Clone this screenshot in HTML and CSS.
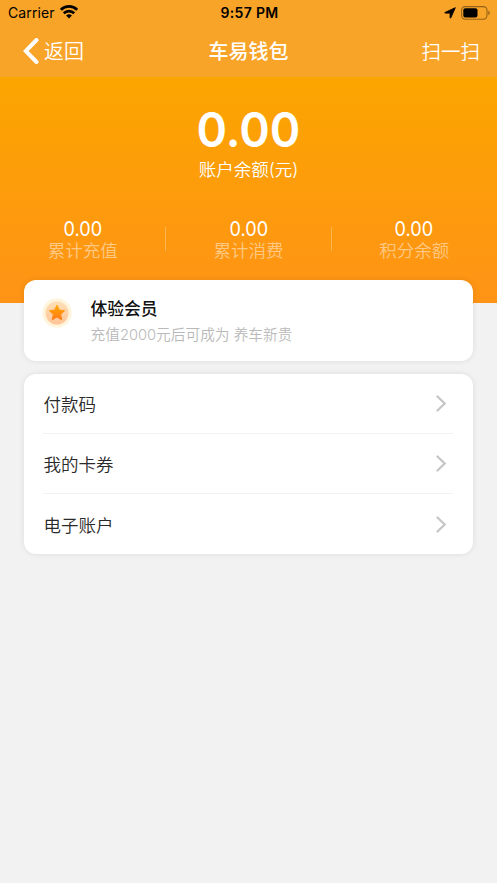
FILE: index.html
```html
<!DOCTYPE html>
<html lang="zh-CN">
<head>
<meta charset="utf-8">
<meta name="viewport" content="width=device-width, initial-scale=1">
<title>车易钱包</title>
<link rel="stylesheet" href="styles.css">
</head>
<body>
<header class="top">
  <div class="status">
    <div class="status-left"><span>Carrier</span>
      <svg class="wifi" width="18" height="14" viewBox="0 0 18 14" fill="none" stroke="#000" stroke-width="2.7"><path d="M.9 4.8a11.5 11.5 0 0 1 16.2 0M3.8 8.2a7.4 7.4 0 0 1 10.4 0"/><path d="M9 13.4 6.1 10.6a4.2 4.2 0 0 1 5.8 0z" fill="#000" stroke="none"/></svg>
    </div>
    <div class="time">9:57 PM</div>
    <div class="status-right">
      <svg width="12" height="12" viewBox="0 0 12 12"><path d="M11.3.7 6.8 10.8q-.5.8-.7-.2V6.1H1.2Q.3 5.9 1.1 5.4z" stroke="#000" stroke-width=".9" stroke-linejoin="round"/></svg>
      <svg width="30" height="14" viewBox="0 0 30 14"><rect x=".6" y=".6" width="25.4" height="12.6" rx="3.6" fill="none" stroke="#000" stroke-opacity=".4" stroke-width="1.1"/><rect x="2.3" y="2.3" width="14.2" height="9.2" rx="2"/><path d="M27.4 4.8v4.4q1.4-.6 1.4-2.2t-1.4-2.2z" fill-opacity=".45"/></svg>
    </div>
  </div>
  <nav class="nav">
    <div class="back"><svg width="16" height="26" viewBox="0 0 16 26"><path d="M13.5 2 2.7 13l10.8 11" fill="none" stroke="#fff" stroke-width="4" stroke-linecap="round" stroke-linejoin="miter"/></svg><span>返回</span></div>
    <h1>车易钱包</h1>
    <div class="scan">扫一扫</div>
  </nav>
</header>
<section class="hero">
  <div class="balance">0.00</div>
  <div class="balance-label">账户余额(元)</div>
  <div class="stats">
    <div class="stat"><b>0.00</b><span>累计充值</span></div>
    <div class="stat"><b>0.00</b><span>累计消费</span></div>
    <div class="stat"><b>0.00</b><span>积分余额</span></div>
  </div>
</section>
<main>
  <section class="card member">
    <svg class="medal" width="30" height="30" viewBox="0 0 30 30">
      <defs><linearGradient id="disc" x2="0" y2="1"><stop stop-color="#ffdfb5"/><stop offset="1" stop-color="#ffc497"/></linearGradient><linearGradient id="star" x2="0" y2="1"><stop stop-color="#ffa800"/><stop offset="1" stop-color="#ff7c1b"/></linearGradient></defs>
      <circle cx="15" cy="15" r="14.7" fill="#fff5dc"/><circle cx="15" cy="15" r="11.5" fill="url(#disc)"/>
      <path d="m15 7.2 2.3 4.8 5.3.7-3.9 3.7 1 5.3-4.7-2.6-4.7 2.6 1-5.3-3.9-3.7 5.3-.7z" fill="url(#star)" stroke="url(#star)" stroke-linejoin="round"/>
    </svg>
    <div><h2>体验会员</h2><p>充值2000元后可成为 养车新贵</p></div>
  </section>
  <section class="card list">
    <div class="row"><span>付款码</span><svg class="chevron" width="11" height="17" viewBox="0 0 11 17"><path d="m1.5 1.5 7.2 7-7.2 7"/></svg></div>
    <div class="row"><span>我的卡券</span><svg class="chevron" width="11" height="17" viewBox="0 0 11 17"><path d="m1.5 1.5 7.2 7-7.2 7"/></svg></div>
    <div class="row"><span>电子账户</span><svg class="chevron" width="11" height="17" viewBox="0 0 11 17"><path d="m1.5 1.5 7.2 7-7.2 7"/></svg></div>
  </section>
</main>
</body>
</html>
```
FILE: styles.css
```css
* { box-sizing: border-box; }
body { margin: 0; min-height: 883px; background: #f2f2f2; font-family: Inter, "Noto Sans CJK SC", sans-serif; }
h1, h2, p { margin: 0; }
svg { display: block; flex: none; }
.top { height: 77px; background: #f8a429; }
.status { height: 25px; display: grid; grid-template-columns: 1fr auto 1fr; align-items: center; padding: 1px 6px 0 8px; font-size: 14px; line-height: 20px; color: #000; }
.status-left, .status-right { display: flex; align-items: center; }
.status-left { gap: 5px; letter-spacing: .1px; }
.wifi { margin-top: -2px; }
.time { font-weight: 600; letter-spacing: .35px; }
.status-right { justify-content: flex-end; gap: 5px; margin-top: -1px; }
.nav { height: 52px; display: grid; grid-template-columns: 1fr 80px 1fr; align-items: center; padding: 1px 17px 0 17px; color: #fff; font-size: 20px; line-height: 30px; font-weight: 350; }
.back { display: flex; align-items: center; gap: 5px; padding-left: 6px; }
.back svg { margin-top: -1px; }
.nav h1 { font-size: 20px; font-weight: 500; white-space: nowrap; }
.scan { justify-self: end; font-size: 19.5px; }
.hero { height: 226px; padding-top: 23px; background: linear-gradient(#fba500, #ff9316); color: #fff; text-align: center; }
.balance { height: 60px; line-height: 60px; font-size: 48px; font-weight: 600; transform: scaleX(.965); }
.balance-label { font-size: 17.5px; line-height: 26px; margin-top: -3px; font-weight: 350; }
.stats { display: grid; grid-template-columns: repeat(3, 1fr); margin-top: 35px; }
.stat { position: relative; height: 46px; }
.stat b, .stat span { display: block; }
.stat b { font-size: 20px; line-height: 22px; font-weight: 400; transform: scaleX(.905); }
.stat span { font-size: 17.5px; line-height: 22px; font-weight: 350; color: #ffc984; }
.stat + .stat::before { content: ""; position: absolute; left: 0; top: 9px; width: 1px; height: 24px; background: #ffb650; }
.stat:nth-child(2)::before { left: -1px; }
main { position: relative; padding: 0 24px; margin-top: -23.5px; }
.card { background: #fff; border-radius: 12px; box-shadow: 0 0 6px rgba(0, 0, 0, .09); }
.member { height: 81.5px; display: flex; padding: 17px 18px 0; gap: 18.5px; }
.medal { margin-top: 1px; }
.member h2 { font-size: 16.8px; line-height: 25px; font-weight: 500; color: #111; }
.member p { margin-top: 2px; font-size: 14.7px; line-height: 22px; font-weight: 350; color: #b9b9b9; }
.list { margin-top: 13px; height: 180px; padding: 0 20px 0 19px; }
.row { height: 60px; display: flex; align-items: center; justify-content: space-between; padding: 0 6px 0 0; border-bottom: 1px solid #f2f2f2; font-size: 17.5px; font-weight: 350; color: #2a2a2a; }
.row span { padding-left: .5px; }
.row:last-child { border: 0; }
.chevron { fill: none; stroke: #c5c5c5; stroke-width: 2.2; stroke-linecap: round; }
```
